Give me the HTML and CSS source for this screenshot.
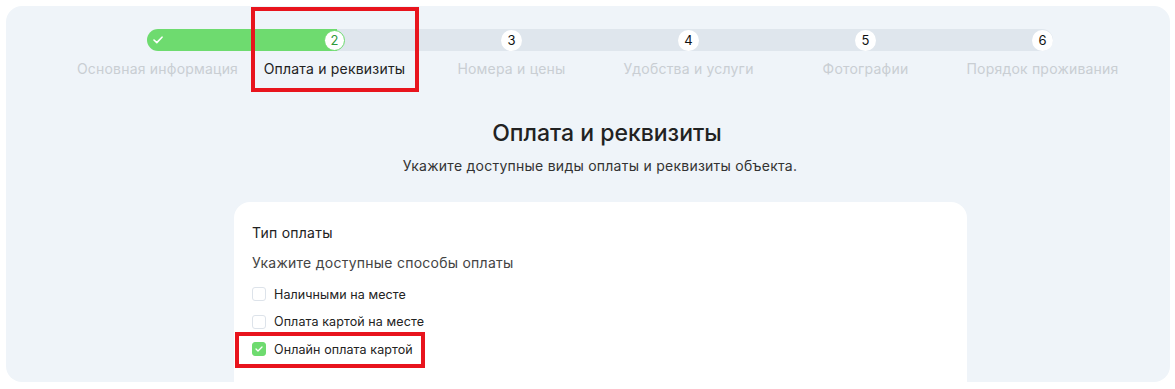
FILE: index.html
```html
<!DOCTYPE html>
<html lang="ru">
<head>
    <meta charset="UTF-8">
    <title>Оплата и реквизиты</title>
    <link rel="stylesheet" href="styles.css">
</head>
<body>
    <div class="panel">
        <div class="steps">
            <div class="track">
                <span class="dot done">
                    <svg width="10" height="8" viewBox="0 0 10 8"><path d="M1 4l2.8 2.6L9 1.2" fill="none" stroke="#fff" stroke-width="1.6" stroke-linecap="round" stroke-linejoin="round"/></svg>
                </span>
                <span class="dot active">2</span>
                <span class="dot">3</span>
                <span class="dot">4</span>
                <span class="dot">5</span>
                <span class="dot">6</span>
            </div>
            <div class="labels">
                <span>Основная информация</span>
                <span class="current">Оплата и реквизиты</span>
                <span>Номера и цены</span>
                <span>Удобства и услуги</span>
                <span>Фотографии</span>
                <span>Порядок проживания</span>
            </div>
        </div>

        <h1>Оплата и реквизиты</h1>
        <p class="lead">Укажите доступные виды оплаты и реквизиты объекта.</p>

        <div class="card">
            <div class="card-title">Тип оплаты</div>
            <div class="card-hint">Укажите доступные способы оплаты</div>
            <label class="check"><span class="box"></span>Наличными на месте</label>
            <label class="check"><span class="box"></span>Оплата картой на месте</label>
            <label class="check"><span class="box on">
                <svg width="8" height="6" viewBox="0 0 8 6"><path d="M1 3l2 2 4-4" fill="none" stroke="#fff" stroke-width="1.3" stroke-linecap="round" stroke-linejoin="round"/></svg>
            </span>Онлайн оплата картой</label>
        </div>
    </div>

    <!-- annotation frames from the screenshot -->
    <div class="mark mark-step"></div>
    <div class="mark mark-online"></div>
</body>
</html>
```

FILE: styles.css
```css
body {
    margin: 0;
    height: 389px;
    overflow: hidden;
    background-color: #fff;
    font-family: 'Inter', 'Noto Sans', sans-serif;
    color: #222;
    position: relative;
}

.panel {
    margin: 6px 5px 0 6px;
    height: 376px;
    box-sizing: border-box;
    padding: 23px 0 0 63px;
    background-color: #eff4f9;
    border-radius: 16px;
}

.steps {
    width: 1062px;
}

.track {
    margin: 0 78px;
    height: 22px;
    border-radius: 11px;
    background: linear-gradient(to right, #6edb6f 0, #6edb6f 190px, #dfe6ed 190px);
    display: flex;
    justify-content: space-between;
    align-items: center;
}

.dot {
    width: 21px;
    height: 21px;
    border-radius: 50%;
    background-color: #fff;
    display: flex;
    align-items: center;
    justify-content: center;
    font-size: 13px;
    color: #111;
    box-sizing: border-box;
}

.dot.done {
    background-color: transparent;
}

.dot.active {
    border: 1px solid #6edb6f;
    color: #2e9a3a;
}

.labels {
    display: grid;
    grid-template-columns: repeat(6, 1fr);
    margin-top: 8px;
    font-size: 14px;
    line-height: 20px;
    letter-spacing: 0.2px;
    color: #c9ced3;
    text-align: center;
    white-space: nowrap;
}

.labels .current {
    color: #222;
}

h1 {
    width: 1062px;
    margin: 40px 0 0;
    font-size: 23px;
    line-height: 28px;
    font-weight: 500;
    text-align: center;
    padding-left: 14px;
    box-sizing: border-box;
}

.lead {
    width: 1062px;
    margin: 9px 0 0;
    font-size: 14px;
    line-height: 20px;
    letter-spacing: 0.25px;
    color: #333;
    text-align: center;
}

.card {
    width: 733px;
    height: 220px;
    box-sizing: border-box;
    margin: 26px 0 0 165px;
    padding: 21px 18px;
    background-color: #fff;
    border-radius: 16px;
}

.card-title {
    font-size: 14px;
    line-height: 20px;
    letter-spacing: 0.25px;
}

.card-hint {
    margin: 10px 0 11px;
    font-size: 14px;
    line-height: 20px;
    letter-spacing: 0.25px;
    color: #444;
}

.check {
    display: flex;
    align-items: center;
    gap: 8px;
    height: 20px;
    margin-bottom: 7.5px;
    font-size: 12.5px;
    letter-spacing: 0.1px;
    color: #222;
}

.box {
    width: 14px;
    height: 14px;
    box-sizing: border-box;
    border: 1px solid #dde3ea;
    border-radius: 3px;
    display: flex;
    align-items: center;
    justify-content: center;
}

.box.on {
    background-color: #6edb6f;
    border-color: #6edb6f;
}

.mark {
    position: absolute;
    border: 4px solid #e8141d;
    box-sizing: border-box;
}

.mark-step {
    left: 251px;
    top: 7px;
    width: 168px;
    height: 85px;
}

.mark-online {
    left: 235px;
    top: 332px;
    width: 190px;
    height: 36px;
}
```
